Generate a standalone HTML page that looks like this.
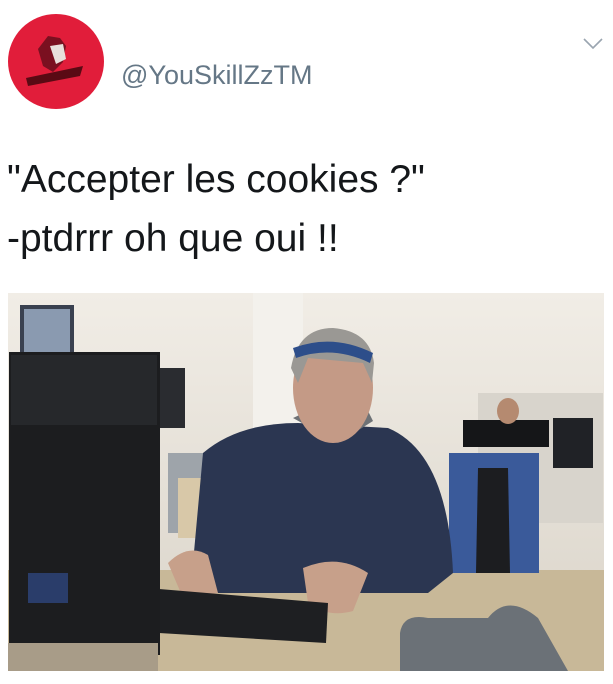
<!DOCTYPE html>
<html><head><meta charset="utf-8"><style>
body{margin:0;width:613px;height:684px;background:#fff;position:relative;overflow:hidden;font-family:"Liberation Sans",sans-serif}
.av{position:absolute;left:8px;top:14px;width:96px;height:95px;border-radius:50%;background:#e11d3a}
.un{position:absolute;left:121px;top:62px;font-size:27px;line-height:27px;color:#657786}
.t{position:absolute;left:7px;font-size:39px;line-height:39px;color:#14171a;white-space:nowrap}
svg{position:absolute}
</style></head><body>
<div class="av"><svg width="96" height="95" style="left:0;top:0"><path d="M30 35 L40 22 L52 24 L58 32 L55 48 L45 58 L35 52Z" fill="#7a1020"/><path d="M42 32 L55 30 L58 45 L48 50Z" fill="#e8e0dc"/><path d="M18 64 L75 52 L72 62 L20 72Z" fill="#5a0a14"/></svg></div>
<div class="un">@YouSkillZzTM</div>
<svg width="20" height="12" style="left:583px;top:38px"><path d="M1 1 L10 10 L19 1" fill="none" stroke="#9aa5b0" stroke-width="1.6"/></svg>
<div class="t" style="top:160px">"Accepter les cookies ?"</div>
<div class="t" style="top:219px">-ptdrrr oh que oui !!</div>
<svg width="596" height="378" style="left:8px;top:293px" viewBox="0 0 596 378">
<defs><linearGradient id="bg" x1="0" y1="0" x2="0" y2="1"><stop offset="0" stop-color="#f1ede6"/><stop offset="1" stop-color="#d9d3c8"/></linearGradient></defs>
<rect width="596" height="378" fill="url(#bg)"/>
<rect x="245" y="0" width="50" height="150" fill="#f3f1ec"/>
<rect x="12" y="12" width="54" height="60" fill="#3a4150"/>
<rect x="16" y="16" width="46" height="52" fill="#8a9ab0"/>
<rect x="145" y="75" width="32" height="60" fill="#2a2c30"/>
<rect x="160" y="160" width="90" height="80" fill="#9ea4aa"/>
<rect x="170" y="185" width="40" height="60" fill="#d8c8a8"/>
<rect x="470" y="100" width="125" height="130" fill="#d8d4cc"/>
<rect x="455" y="127" width="86" height="27" fill="#151618"/>
<rect x="545" y="125" width="40" height="50" fill="#202226"/>
<ellipse cx="500" cy="118" rx="11" ry="13" fill="#b58a70"/>
<rect x="0" y="277" width="596" height="101" fill="#c8b898"/>
<path d="M441 160 L531 160 L531 280 L441 280Z" fill="#3a5a9a"/>
<path d="M470 175 L500 175 L502 280 L468 280Z" fill="#1c1d20"/>
<path d="M195 160 Q230 130 290 130 L380 135 Q440 160 445 280 L420 300 L200 300 L185 270Z" fill="#2b3651"/>
<path d="M285 125 L330 150 L365 128 L360 118 L300 118Z" fill="#6e7276"/>
<ellipse cx="325" cy="95" rx="40" ry="55" fill="#c49a86"/>
<path d="M283 75 Q290 35 325 35 Q362 38 366 70 L364 90 L355 70 L300 65 L290 90Z" fill="#9a9894"/>
<path d="M285 55 Q325 40 365 60 L362 70 Q325 52 288 65Z" fill="#2d4e8a"/>
<path d="M160 270 Q180 250 200 262 L210 300 L175 305Z" fill="#c7a08a"/>
<path d="M295 275 Q330 260 360 280 L345 318 Q320 325 300 310Z" fill="#c7a08a"/>
<path d="M151 296 L320 310 L318 350 L151 340Z" fill="#1e1f22"/>
<rect x="1" y="59" width="151" height="303" fill="#1c1d1f"/>
<rect x="3" y="62" width="146" height="70" fill="#26282b"/>
<rect x="20" y="280" width="40" height="30" fill="#2a3d6a"/>
<rect x="0" y="350" width="150" height="28" fill="#a89c88"/>
<path d="M392 340 Q395 320 420 325 L480 325 Q500 300 530 325 L560 378 L392 378Z" fill="#6b7177"/>
</svg>
</body></html>
